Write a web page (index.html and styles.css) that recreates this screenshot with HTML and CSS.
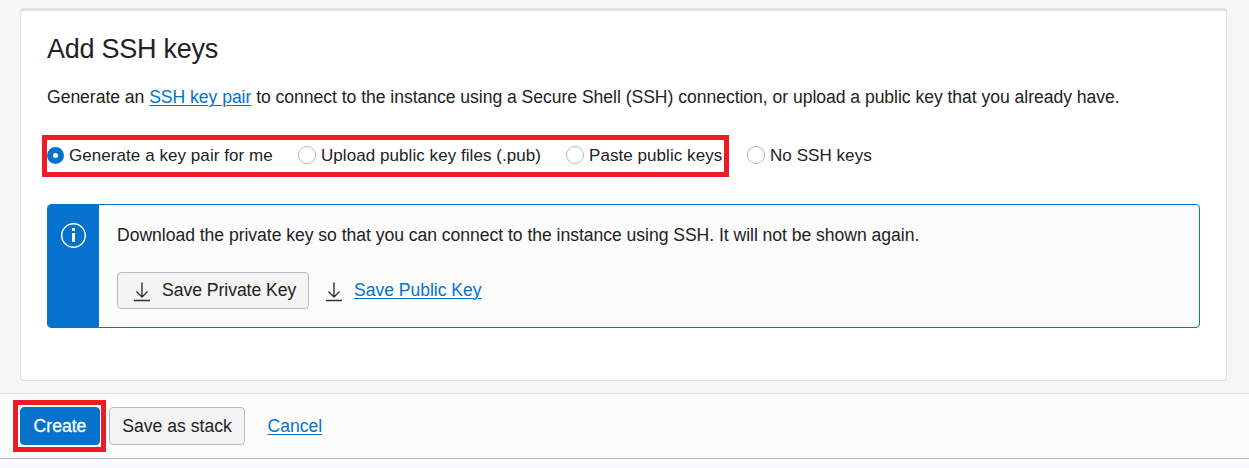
FILE: index.html
```html
<!DOCTYPE html>
<html lang="en">
<head>
<meta charset="utf-8">
<title>Add SSH keys</title>
<link rel="stylesheet" href="styles.css">
</head>
<body>
<main class="content">
  <section class="panel">
    <h2 class="title">Add SSH keys</h2>
    <p class="intro">Generate an <a class="link" href="#">SSH key pair</a> to connect to the instance using a Secure Shell (SSH) connection, or upload a public key that you already have.</p>
    <div class="options">
      <div class="marked">
        <label class="option generate"><span class="radio checked"></span><span class="option-text">Generate a key pair for me</span></label>
        <label class="option upload"><span class="radio"></span><span class="option-text">Upload public key files (.pub)</span></label>
        <label class="option paste"><span class="radio"></span><span class="option-text">Paste public keys</span></label>
      </div>
      <label class="option"><span class="radio"></span><span class="option-text">No SSH keys</span></label>
    </div>
    <div class="notice">
      <div class="notice-side">
        <svg class="info" width="26" height="26" viewBox="0 0 26 26"><circle cx="13.500" cy="12.500" r="11.800" fill="none" stroke="#fff" stroke-width="1.500"/><path d="M12 5h3v3h-3zM12 10h3v9h-3z" fill="#fff"/></svg>
      </div>
      <div class="notice-body">
        <p class="notice-text">Download the private key so that you can connect to the instance using SSH. It will not be shown again.</p>
        <div class="downloads">
          <button class="button private"><svg class="arrow" width="18" height="20" viewBox="0 0 18 20"><path d="M9 .5V15M3.500 9.500 9 15l5.500-5.500M1 18.500h16" fill="none" stroke="#333" stroke-width="1.400"/></svg><span>Save Private Key</span></button>
          <svg class="arrow" width="18" height="20" viewBox="0 0 18 20"><path d="M9 .5V15M3.500 9.500 9 15l5.500-5.500M1 18.500h16" fill="none" stroke="#333" stroke-width="1.400"/></svg>
          <a class="link public" href="#">Save Public Key</a>
        </div>
      </div>
    </div>
  </section>
</main>
<footer class="actions">
  <div class="create-mark"><button class="button create">Create</button></div>
  <button class="button stack">Save as stack</button>
  <a class="link cancel" href="#">Cancel</a>
</footer>
</body>
</html>
```
FILE: styles.css
```css
* { box-sizing: border-box; }
body {
  margin: 0;
  height: 468px;
  overflow: hidden;
  background: #fafafc;
  color: #222;
  font: 17.6px/24px "Liberation Sans", Arial, sans-serif;
  letter-spacing: -.045px;
}
p, h2 { margin: 0; white-space: nowrap; }
.content { height: 393px; padding: 8px 22px 0 20px; background: #f6f6f6; }
.panel {
  height: 373px;
  padding: 22px 26px 0;
  border: 1px solid #e0e0e4;
  border-top-width: 3px;
  border-radius: 4px;
  background: #fff;
}
.title { font-size: 27px; line-height: 32px; font-weight: 400; letter-spacing: -.25px; }
.intro { margin-top: 20px; }
.link { color: #0572ce; text-decoration: underline; text-decoration-thickness: 1px; text-underline-offset: 2px; }
.options { display: flex; align-items: center; margin: 26px 0 0 -5px; font-size: 17px; letter-spacing: .06px; }
.marked { display: flex; align-items: center; width: 687px; height: 42px; margin-right: 18px; border: 5px solid #ed1c24; padding-bottom: 2px; }
.option { display: flex; align-items: center; gap: 5px; white-space: nowrap; }
.option-text { padding-top: 2px; }
.options > .option { padding-bottom: 2px; }
.generate { width: 251px; }
.upload { width: 268px; }
.radio { flex: none; width: 18px; height: 18px; border: 1px solid #b6bac4; border-radius: 50%; background: #fff; }
.checked { width: 17px; height: 17px; border: 6px solid #0572ce; }
.notice { display: flex; height: 124px; margin-top: 27px; border: 1px solid #0572ce; border-radius: 4px; background: #fcfcfc; overflow: hidden; }
.notice-side { width: 51px; padding: 18px 0 0 12px; background: #0572ce; }
.info, .arrow { display: block; flex: none; }
.notice-body { padding: 18px; }
.downloads { display: flex; align-items: center; margin-top: 25px; }
.button {
  display: flex;
  align-items: center;
  justify-content: center;
  height: 38px;
  padding: 0;
  border: 1px solid #b6bac4;
  border-radius: 4px;
  background: #f4f4f4;
  color: #222;
  font: inherit;
}
.private { width: 192px; height: 37px; justify-content: flex-start; padding-left: 15px; gap: 11px; margin-right: 16px; letter-spacing: -.045px; }
.private span, .public { padding-bottom: 2px; }
.arrow { margin-top: 3px; }
.public { margin-left: 11px; }
.actions { display: flex; align-items: center; height: 66px; padding: 0 13px; border-top: 1px solid #e2e2e2; border-bottom: 1px solid #b1b5bf; background: #fcfcfc; }
.create-mark { width: 93px; height: 52px; padding: 2px; border: 5px solid #ed1c24; background: #fff; }
.create { width: 80px; border-color: #0572ce; background: #0572ce; color: #fff; -webkit-text-stroke: .3px #fff; }
.stack { width: 136px; margin-left: 3px; }
.cancel { margin-left: 22.5px; }
```
